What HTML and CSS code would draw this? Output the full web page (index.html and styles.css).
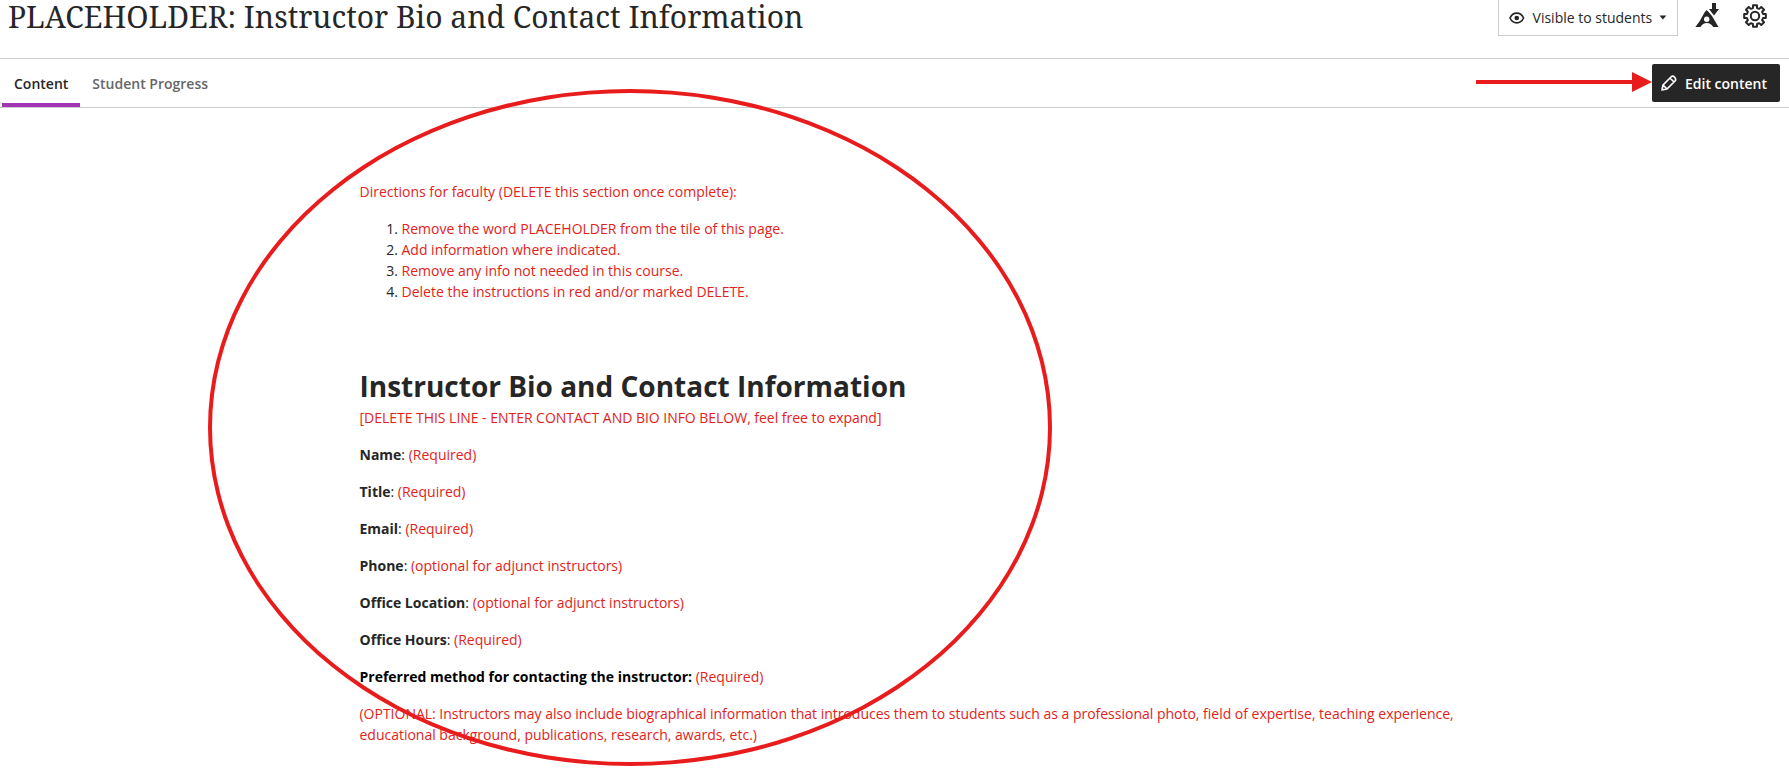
FILE: index.html
```html
<!DOCTYPE html>
<html lang="en">

<head>
    <meta charset="UTF-8">
    <meta name="viewport" content="width=device-width, initial-scale=1.0">
    <title>Instructor Bio and Contact Information</title>
    <link rel="stylesheet" href="styles.css">
</head>

<body>
    <header class="header">
        <h1 class="title">PLACEHOLDER: Instructor Bio and Contact Information</h1>
        <div class="tools">
            <button class="visibility">
                <svg class="eye" width="16" height="12" viewBox="0 0 16 12">
                    <path d="M1 6C2.6 2.6 5.1 1 8 1s5.400 1.600 7 5c-1.600 3.400-4.100 5-7 5S2.600 9.400 1 6z" fill="none" stroke="#262626" stroke-width="1.700"/>
                    <circle cx="8" cy="6" r="2.400" fill="#262626"/>
                </svg>
                <span>Visible to students</span>
                <svg width="8" height="5" viewBox="0 0 8 5"><path d="M0.500 0.500h7L4 4.500z" fill="#262626"/></svg>
            </button>
            <svg class="ally" width="24" height="24" viewBox="0 0 24 24">
                <path d="M9.500 9.500L11.700 7l2.300 2.500L17 13l6.500 11h-5.300c-1.600-2.800-3.700-4-6.400-4s-4.800 1.200-6.300 4H0.300L4.500 18.500z" fill="#262626"/>
                <circle cx="11.700" cy="16.200" r="2.700" fill="#fff"/>
                <path d="M17 0h4v6h3l-5 6.500L14 6h3z" fill="#262626"/>
            </svg>
            <svg class="gear" width="24" height="24" viewBox="0 0 24 24" fill="none" stroke="#262626" stroke-width="2" stroke-linejoin="round">
                <path id="teeth"/>
                <circle cx="12" cy="12" r="4.200"/>
            </svg>
        </div>
    </header>

    <nav class="tabs">
        <a class="tab active">Content</a>
        <a class="tab">Student Progress</a>
        <svg class="arrow" width="176" height="22" viewBox="0 0 176 22">
            <path d="M0 9h156V1l20 10-20 10v-8H0z" fill="#e81c1c"/>
        </svg>
        <button class="edit">
            <svg width="16" height="16" viewBox="0 0 16 16" fill="none" stroke="#fff" stroke-width="1.700" stroke-linejoin="round">
                <path d="M1 15l1-5L10.500 1.500Q12 0.500 13.500 2T14.500 5.500L6 14zM9 3l4 4M2 10l4 4"/>
            </svg>
            <span>Edit content</span>
        </button>
    </nav>

    <main class="document">
        <p class="red">Directions for faculty (DELETE this section once complete):</p>
        <ol class="steps">
            <li><span class="red">Remove the word PLACEHOLDER from the tile of this page.</span></li>
            <li><span class="red">Add information where indicated.</span></li>
            <li><span class="red">Remove any info not needed in this course.</span></li>
            <li><span class="red">Delete the instructions in red and/or marked DELETE.</span></li>
        </ol>

        <h2>Instructor Bio and Contact Information</h2>
        <p class="red note">[DELETE THIS LINE - ENTER CONTACT AND BIO INFO BELOW, feel free to expand]</p>
        <p><strong>Name</strong>: <span class="red">(Required)</span></p>
        <p><strong>Title</strong>: <span class="red">(Required)</span></p>
        <p><strong>Email</strong>: <span class="red">(Required)</span></p>
        <p><strong>Phone</strong>: <span class="red">(optional for adjunct instructors)</span></p>
        <p><strong>Office Location</strong>: <span class="red">(optional for adjunct instructors)</span></p>
        <p><strong>Office Hours</strong>: <span class="red">(Required)</span></p>
        <p><strong class="black">Preferred method for contacting the instructor:</strong> <span class="red">(Required)</span></p>
        <p class="red optional">(OPTIONAL: Instructors may also include biographical information that introduces them to students such as a professional photo, field of expertise, teaching experience, educational background, publications, research, awards, etc.)</p>
    </main>

    <div class="ellipse"></div>

    <script>
        // outline of the gear: 8 teeth
        var d = "";
        for (var i = 0; i < 8; i++) {
            var a = i * Math.PI / 4;
            [[-0.25, 8.3], [-0.18, 11], [0.18, 11], [0.25, 8.3]].forEach(function (p) {
                var x = 12 + p[1] * Math.sin(a + p[0]);
                var y = 12 - p[1] * Math.cos(a + p[0]);
                d += (d ? "L" : "M") + x.toFixed(2) + " " + y.toFixed(2);
            });
        }
        document.getElementById("teeth").setAttribute("d", d + "Z");
    </script>
</body>

</html>
```
FILE: styles.css
```css
* {
    box-sizing: border-box;
}

body {
    margin: 0;
    height: 769px;
    overflow: hidden;
    position: relative;
    background-color: #fff;
    color: #262626;
    font-family: "Open Sans", "Noto Sans", sans-serif;
    font-size: 14px;
    line-height: 21px;
}

.header {
    display: flex;
    justify-content: space-between;
    align-items: flex-start;
    height: 59px;
    padding: 0 22px 0 8px;
    border-bottom: 1px solid #ccc;
}

.title {
    margin: 0;
    font-family: "Noto Serif", "Droid Serif", "DejaVu Serif", serif;
    font-size: 30px;
    font-weight: 400;
    line-height: 33px;
    white-space: nowrap;
}

.tools {
    display: flex;
    align-items: flex-start;
}

button {
    display: flex;
    align-items: center;
    font-family: inherit;
    font-size: 14px;
    color: #262626;
    white-space: nowrap;
}

.visibility {
    width: 180px;
    height: 37px;
    margin-top: -1px;
    padding: 0 10px;
    background-color: #fff;
    border: 1px solid #ccc;
    gap: 7px;
}

.eye {
    margin-right: 1px;
}

.ally {
    margin: 3px 0 0 17px;
}

.gear {
    margin: 4px 0 0 24px;
}

.tabs {
    display: flex;
    height: 49px;
    padding: 0 9px 0 2px;
    border-bottom: 1px solid #ccc;
}

.tab {
    height: 48px;
    padding: 14px 12px 0;
    font-weight: 600;
    color: #666;
}

.active {
    color: #262626;
    border-bottom: 4px solid #a234b5;
}

.arrow {
    margin: 12px 0 0 auto;
}

.edit {
    width: 128px;
    height: 38px;
    margin-top: 5px;
    padding: 0 9px;
    gap: 8px;
    border: none;
    border-radius: 2px;
    background-color: #262626;
    color: #fff;
    font-weight: 600;
}

.document {
    width: 1110px;
    margin-left: 359.5px;
    padding-top: 73px;
}

p {
    margin: 0 0 16px;
}

.steps {
    margin: 0 0 66px;
    padding-left: 42px;
}

h2 {
    margin: 0;
    font-size: 28px;
    font-weight: 700;
    line-height: 36px;
    padding-bottom: 3px;
}

.note {
    letter-spacing: -0.03px;
}

.optional {
    letter-spacing: -0.01px;
}

.red {
    color: #e2231a;
}

.black {
    color: #000;
}

/* drawn over the page */
.ellipse {
    position: absolute;
    left: 208px;
    top: 89px;
    width: 844px;
    height: 677px;
    border: 4px solid #e81c1c;
    border-radius: 50%;
}
```
